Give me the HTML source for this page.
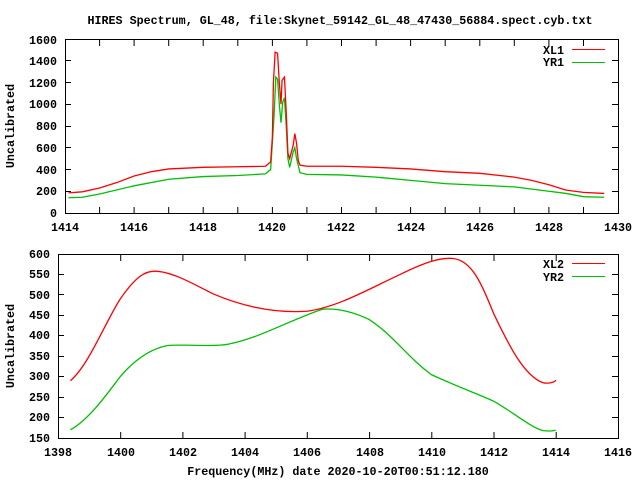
<!DOCTYPE html>
<html><head><style>
html,body{margin:0;padding:0;background:#fff;}
svg{display:block;}
text{font-family:"Liberation Mono","DejaVu Sans Mono",monospace;font-size:11.7px;font-weight:bold;fill:#000;}
</style></head><body>
<svg width="640" height="480" viewBox="0 0 640 480" xmlns="http://www.w3.org/2000/svg">
<text x="340" y="24" text-anchor="middle">HIRES Spectrum, GL_48, file:Skynet_59142_GL_48_47430_56884.spect.cyb.txt</text>

<g stroke="#000" stroke-width="1" fill="none">
<rect x="65.5" y="39.5" width="553" height="174"/>
<path d="M99.6 213v-6M99.6 40v6M134.1 213v-6M134.1 40v6M168.7 213v-6M168.7 40v6M203.2 213v-6M203.2 40v6M237.8 213v-6M237.8 40v6M272.4 213v-6M272.4 40v6M306.9 213v-6M306.9 40v6M341.5 213v-6M341.5 40v6M376.1 213v-6M376.1 40v6M410.6 213v-6M410.6 40v6M445.2 213v-6M445.2 40v6M479.8 213v-6M479.8 40v6M514.3 213v-6M514.3 40v6M548.9 213v-6M548.9 40v6M583.5 213v-6M583.5 40v6"/>
<path d="M65 191.5h6M618 191.5h-6M65 169.5h6M618 169.5h-6M65 147.5h6M618 147.5h-6M65 126.5h6M618 126.5h-6M65 104.5h6M618 104.5h-6M65 82.5h6M618 82.5h-6M65 60.5h6M618 60.5h-6"/>
</g>
<g>
<text x="57" y="217" text-anchor="end">0</text>
<text x="57" y="195" text-anchor="end">200</text>
<text x="57" y="174" text-anchor="end">400</text>
<text x="57" y="152" text-anchor="end">600</text>
<text x="57" y="130" text-anchor="end">800</text>
<text x="57" y="108" text-anchor="end">1000</text>
<text x="57" y="87" text-anchor="end">1200</text>
<text x="57" y="65" text-anchor="end">1400</text>
<text x="57" y="44" text-anchor="end">1600</text>
<text x="65" y="231" text-anchor="middle">1414</text>
<text x="134" y="231" text-anchor="middle">1416</text>
<text x="203" y="231" text-anchor="middle">1418</text>
<text x="272" y="231" text-anchor="middle">1420</text>
<text x="341" y="231" text-anchor="middle">1422</text>
<text x="411" y="231" text-anchor="middle">1424</text>
<text x="480" y="231" text-anchor="middle">1426</text>
<text x="549" y="231" text-anchor="middle">1428</text>
<text x="618" y="231" text-anchor="middle">1430</text>
</g>
<text transform="translate(14,126) rotate(-90)" text-anchor="middle">Uncalibrated</text>
<text x="564" y="54" text-anchor="end">XL1</text>
<text x="564" y="66" text-anchor="end">YR1</text>
<path d="M572 49.5h33" stroke="#f00" stroke-width="1"/>
<path d="M572 62.5h33" stroke="#00c000" stroke-width="1"/>
<g transform="translate(65,213) scale(34.5625,-0.10875) translate(-1414,0)" fill="none" stroke-width="1.3">
<polyline vector-effect="non-scaling-stroke" stroke="#00c000" points="1414.1,140 1414.5,145 1415,175 1416,250 1417,310 1418,335 1419,345 1419.8,360 1419.95,400 1420.05,900 1420.1,1250 1420.15,1230 1420.2,1000 1420.25,830 1420.3,1020 1420.35,1060 1420.4,800 1420.45,500 1420.5,420 1420.6,560 1420.65,600 1420.7,500 1420.8,370 1421,355 1422,350 1423,330 1424,300 1425,270 1426,255 1427,240 1428,200 1428.5,180 1429,150 1429.6,145"/>
<polyline vector-effect="non-scaling-stroke" stroke="#f00" points="1414.1,185 1414.5,195 1415,230 1415.5,280 1416,340 1416.5,380 1417,405 1418,420 1419,425 1419.8,430 1419.95,470 1420,700 1420.03,1200 1420.08,1480 1420.15,1470 1420.2,1200 1420.25,1000 1420.28,1220 1420.35,1250 1420.4,930 1420.45,550 1420.5,500 1420.6,620 1420.65,730 1420.7,640 1420.75,480 1420.8,440 1421,430 1422,430 1423,420 1424,405 1425,380 1426,365 1427,330 1427.5,300 1428,260 1428.5,210 1429,190 1429.6,180"/>
</g>

<g stroke="#000" stroke-width="1" fill="none">
<rect x="58.5" y="254.5" width="560" height="184"/>
<path d="M120.7 438v-6M120.7 255v6M182.9 438v-6M182.9 255v6M245.1 438v-6M245.1 255v6M307.3 438v-6M307.3 255v6M369.6 438v-6M369.6 255v6M431.8 438v-6M431.8 255v6M494 438v-6M494 255v6M556.2 438v-6M556.2 255v6"/>
<path d="M58 417.5h6M618 417.5h-6M58 397.5h6M618 397.5h-6M58 376.5h6M618 376.5h-6M58 356.5h6M618 356.5h-6M58 335.5h6M618 335.5h-6M58 315.5h6M618 315.5h-6M58 294.5h6M618 294.5h-6M58 274.5h6M618 274.5h-6"/>
</g>
<g>
<text x="50" y="442" text-anchor="end">150</text>
<text x="50" y="421" text-anchor="end">200</text>
<text x="50" y="401" text-anchor="end">250</text>
<text x="50" y="380" text-anchor="end">300</text>
<text x="50" y="360" text-anchor="end">350</text>
<text x="50" y="339" text-anchor="end">400</text>
<text x="50" y="319" text-anchor="end">450</text>
<text x="50" y="299" text-anchor="end">500</text>
<text x="50" y="278" text-anchor="end">550</text>
<text x="50" y="258" text-anchor="end">600</text>
<text x="58" y="456" text-anchor="middle">1398</text>
<text x="121" y="456" text-anchor="middle">1400</text>
<text x="183" y="456" text-anchor="middle">1402</text>
<text x="245" y="456" text-anchor="middle">1404</text>
<text x="307" y="456" text-anchor="middle">1406</text>
<text x="370" y="456" text-anchor="middle">1408</text>
<text x="432" y="456" text-anchor="middle">1410</text>
<text x="494" y="456" text-anchor="middle">1412</text>
<text x="556" y="456" text-anchor="middle">1414</text>
<text x="618" y="456" text-anchor="middle">1416</text>
</g>
<text transform="translate(14,346) rotate(-90)" text-anchor="middle">Uncalibrated</text>
<text x="338" y="475" text-anchor="middle">Frequency(MHz) date 2020-10-20T00:51:12.180</text>
<text x="564" y="268" text-anchor="end">XL2</text>
<text x="564" y="281" text-anchor="end">YR2</text>
<path d="M572 263.5h33" stroke="#f00" stroke-width="1"/>
<path d="M572 276.5h33" stroke="#00c000" stroke-width="1"/>
<g transform="translate(58,438) scale(31.111,-0.40889) translate(-1398,-150)" fill="none" stroke-width="1.3">
<path vector-effect="non-scaling-stroke" stroke="#00c000" d="M1398.4,170 C1399,195 1399.6,260 1400,300 C1400.5,345 1401,368 1401.5,376 C1402,380 1403,372 1403.5,380 C1404.5,395 1405.5,440 1406.5,465 C1407,468 1407.5,458 1408,440 C1408.8,400 1409.2,350 1410,305 C1411,270 1411.6,255 1412,240 C1412.6,215 1413.2,175 1413.6,168 C1413.8,166 1414,168 1414,170"/>
<path vector-effect="non-scaling-stroke" stroke="#f00" d="M1398.4,290 C1399,330 1399.5,430 1400,490 C1400.5,545 1400.8,558 1401.1,558 C1401.7,558 1402.5,520 1403,502 C1404,470 1405,455 1406,460 C1407,470 1408,515 1409,550 C1409.8,580 1410.3,592 1410.7,589 C1411.3,584 1411.6,530 1412,455 C1412.5,375 1413,300 1413.6,285 C1413.8,282 1414,288 1414,292"/>
</g>
</svg>
</body></html>
